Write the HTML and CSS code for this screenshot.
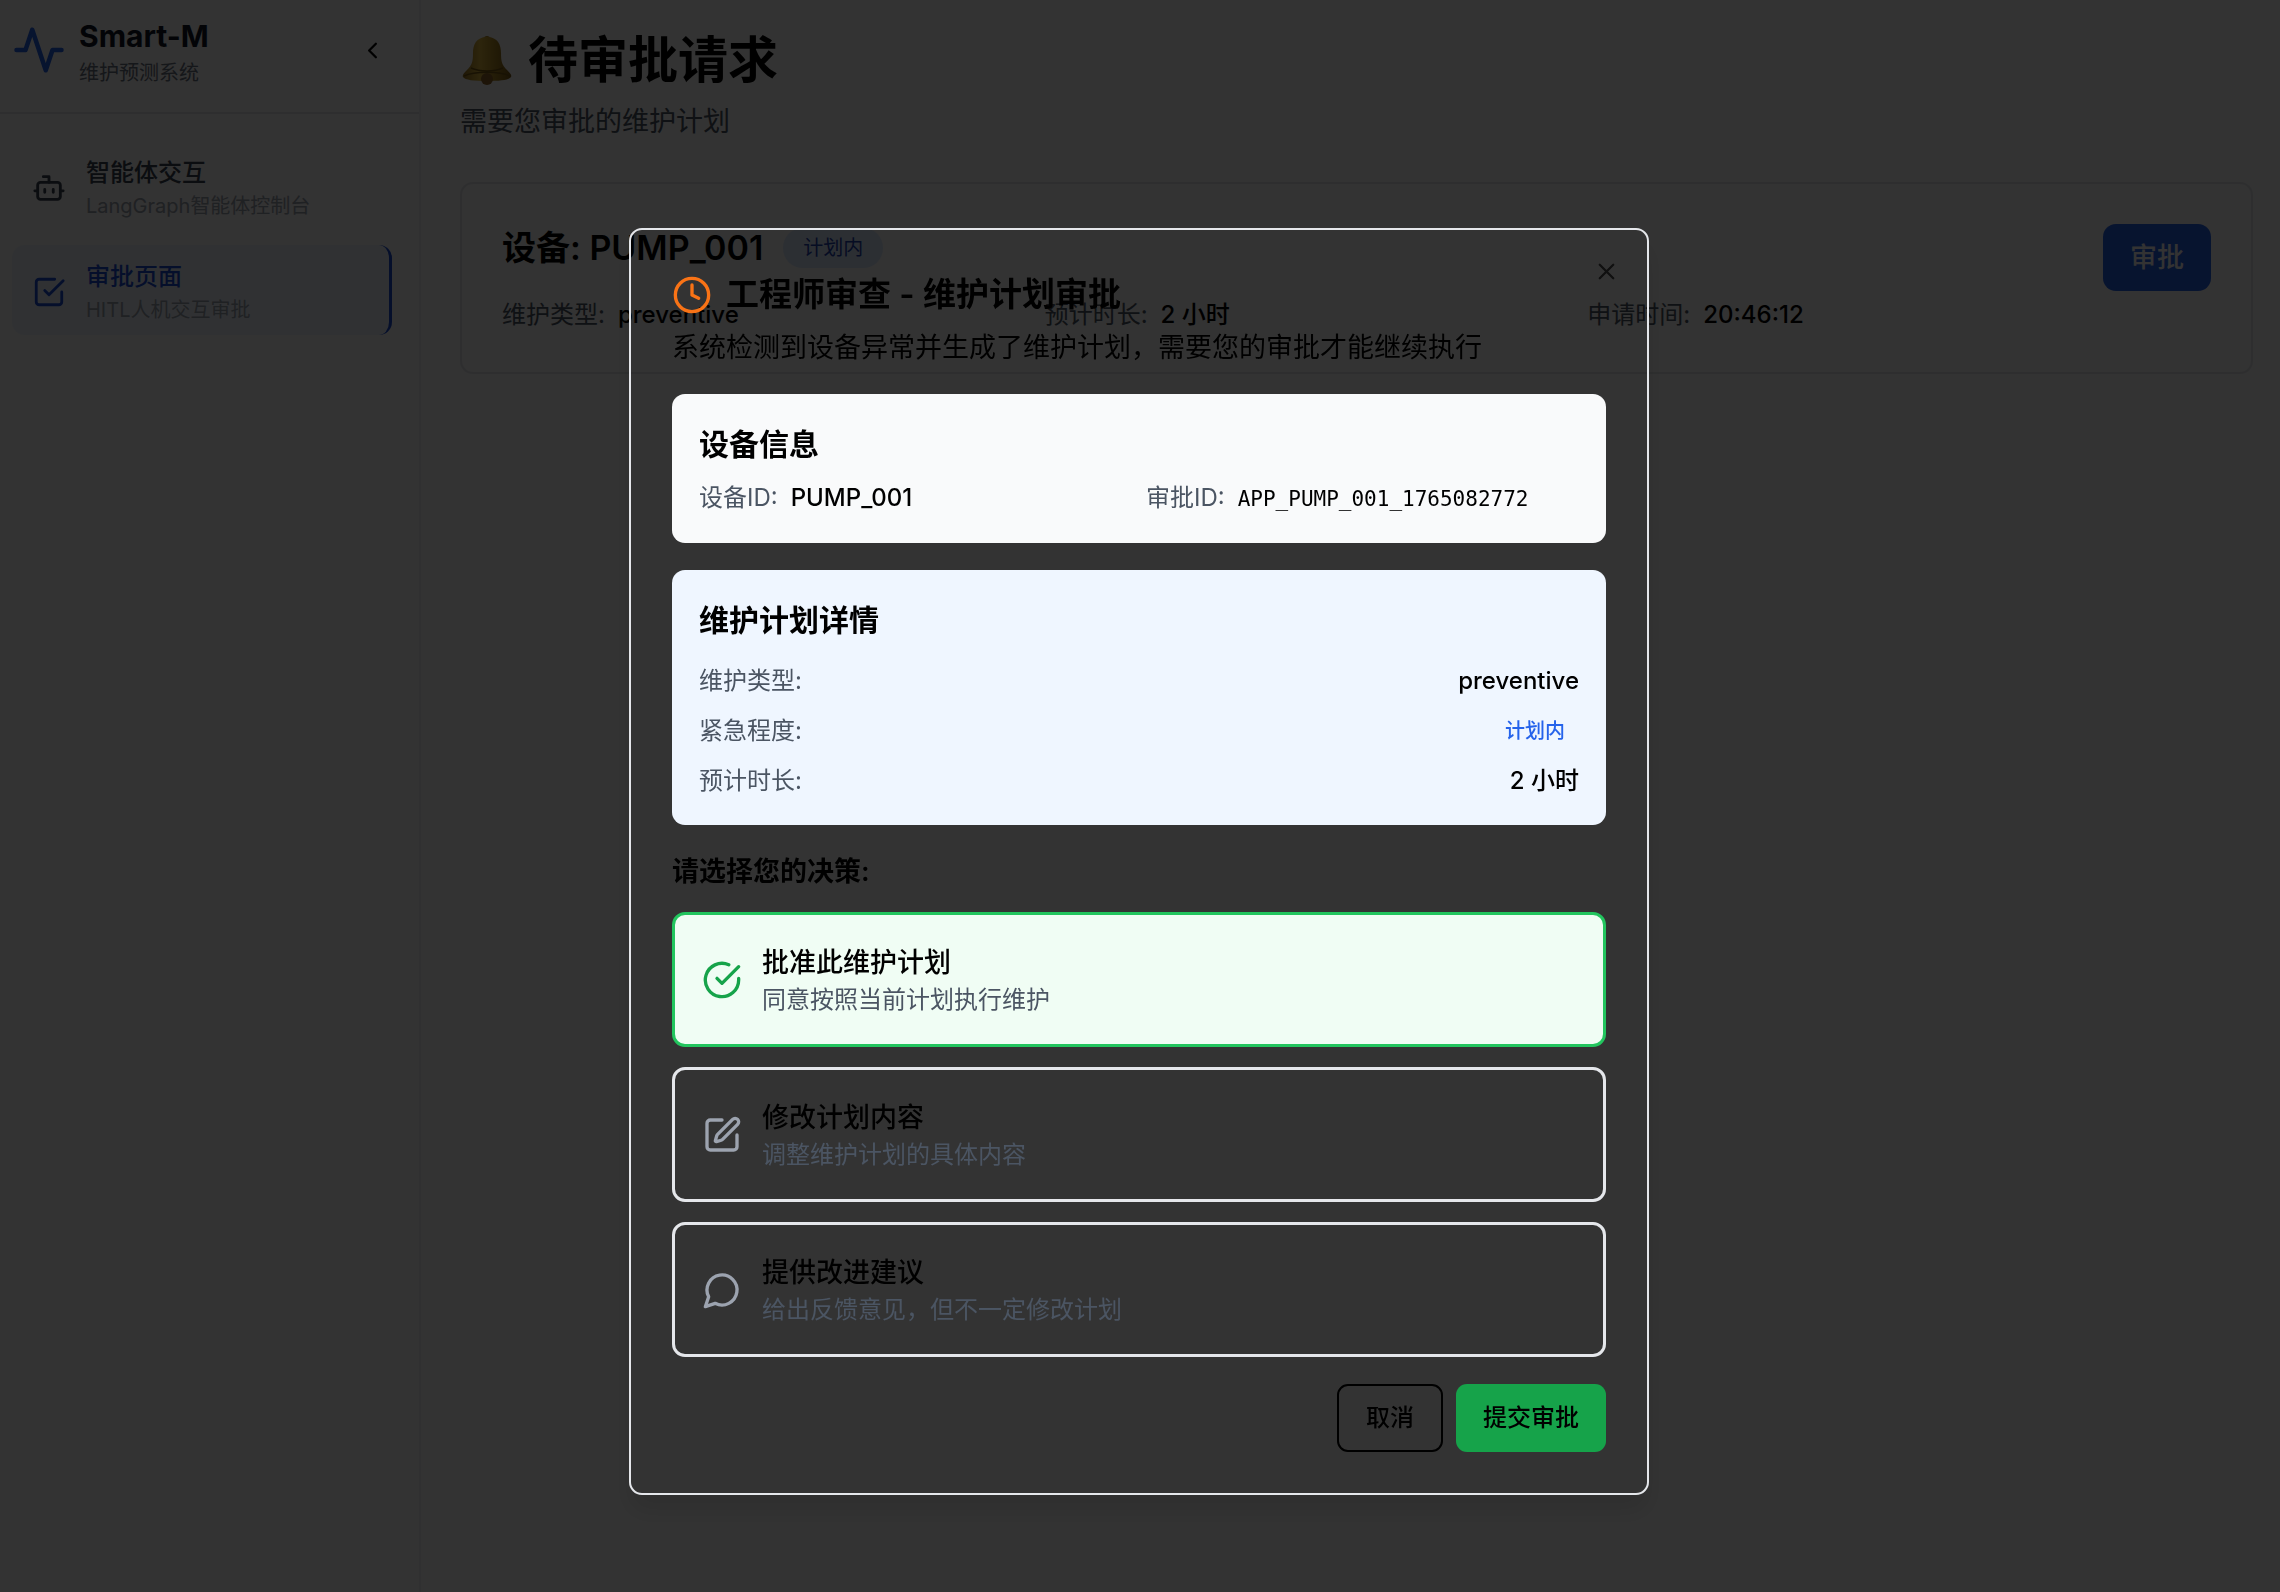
FILE: index.html
```html
<!DOCTYPE html>
<html lang="zh-CN">
<head>
    <meta charset="UTF-8">
    <meta name="viewport" content="width=device-width, initial-scale=1.0">
    <title>Smart-M 维护预测系统</title>
    <link rel="stylesheet" href="styles.css">
</head>
<body>
    <div class="layout">
        <aside class="sidebar">
            <div class="sidebar-header">
                <svg class="icon logo" viewBox="0 0 24 24"><path d="M22 12h-4l-3 9L9 3l-3 9H2"/></svg>
                <div class="brand">
                    <div class="brand-name">Smart-M</div>
                    <div class="brand-sub">维护预测系统</div>
                </div>
                <button type="button" class="collapse" aria-label="收起侧边栏">
                    <svg class="icon icon-sm" viewBox="0 0 24 24"><path d="m15 18-6-6 6-6"/></svg>
                </button>
            </div>
            <nav class="nav">
                <a href="#agent" class="nav-item">
                    <svg class="icon icon-md" viewBox="0 0 24 24"><path d="M12 8V4H8"/><rect width="16" height="12" x="4" y="8" rx="2"/><path d="M2 14h2M20 14h2M15 13v2M9 13v2"/></svg>
                    <span class="nav-text">
                        <span class="nav-title">智能体交互</span>
                        <span class="nav-desc">LangGraph智能体控制台</span>
                    </span>
                </a>
                <a href="#approval" class="nav-item active">
                    <svg class="icon icon-md" viewBox="0 0 24 24"><path d="m9 11 3 3L22 4"/><path d="M21 12v7a2 2 0 0 1-2 2H5a2 2 0 0 1-2-2V5a2 2 0 0 1 2-2h11"/></svg>
                    <span class="nav-text">
                        <span class="nav-title">审批页面</span>
                        <span class="nav-desc">HITL人机交互审批</span>
                    </span>
                </a>
            </nav>
        </aside>

        <main class="main">
            <h1 class="page-title">
                <svg class="bell" viewBox="0 0 50 50">
                    <defs>
                        <linearGradient id="bellBody" x1="0" y1="0" x2="1" y2="0">
                            <stop offset="0" stop-color="#9a7420"/>
                            <stop offset="0.35" stop-color="#e0b840"/>
                            <stop offset="0.65" stop-color="#b08a24"/>
                            <stop offset="1" stop-color="#7a5a14"/>
                        </linearGradient>
                    </defs>
                    <circle cx="25" cy="4" r="3" fill="#a8801c"/>
                    <path d="M25 2C14 2 11 10 11 18c0 9-1 12-6 17-3 3-5 5-4 7 2 3 11 4 24 4s22-1 24-4c1-2-1-4-4-7-5-5-6-8-6-17C39 10 36 2 25 2z" fill="url(#bellBody)"/>
                    <path d="M9 33c9 4 23 4 32 0M2 41c10-5 36-5 46 0" fill="none" stroke="#7a5a14" stroke-width="1.5"/>
                    <circle cx="25" cy="44" r="6" fill="#8f6428"/>
                </svg>
                待审批请求
            </h1>
            <p class="page-sub">需要您审批的维护计划</p>

            <section class="card">
                <div class="card-body">
                    <div class="card-head">
                        <h2 class="card-title">设备: PUMP_001</h2>
                        <span class="tag">计划内</span>
                    </div>
                    <div class="meta">
                        <div><span class="label">维护类型:</span><span class="value">preventive</span></div>
                        <div><span class="label">预计时长:</span><span class="value">2 小时</span></div>
                        <div><span class="label">申请时间:</span><span class="value">20:46:12</span></div>
                    </div>
                </div>
                <button type="button" class="approve">审批</button>
            </section>
        </main>
    </div>

    <div class="overlay">
        <div class="modal" role="dialog" aria-modal="true" aria-labelledby="modalTitle">
            <button type="button" class="close" aria-label="关闭">
                <svg class="icon icon-sm" viewBox="0 0 24 24"><path d="M18 6 6 18M6 6l12 12"/></svg>
            </button>
            <h2 class="modal-title" id="modalTitle">
                <svg class="icon icon-lg clock" viewBox="0 0 24 24"><circle cx="12" cy="12" r="10"/><path d="M12 6v6l4 2"/></svg>
                工程师审查 - 维护计划审批
            </h2>
            <p class="modal-desc">系统检测到设备异常并生成了维护计划，需要您的审批才能继续执行</p>

            <div class="panels">
                <section class="panel">
                    <h3 class="panel-title">设备信息</h3>
                    <div class="panel-grid">
                        <div><span class="label">设备ID:</span><span class="value">PUMP_001</span></div>
                        <div><span class="label">审批ID:</span><span class="value mono">APP_PUMP_001_1765082772</span></div>
                    </div>
                </section>

                <section class="panel panel-blue">
                    <h3 class="panel-title">维护计划详情</h3>
                    <div class="panel-rows">
                        <div class="row"><span class="label">维护类型:</span><span class="value">preventive</span></div>
                        <div class="row"><span class="label">紧急程度:</span><span class="level">计划内</span></div>
                        <div class="row"><span class="label">预计时长:</span><span class="value">2 小时</span></div>
                    </div>
                </section>

                <div class="decision">
                    <h3 class="decision-title">请选择您的决策:</h3>
                    <div class="options">
                        <button type="button" class="option selected" aria-pressed="true">
                            <svg class="icon icon-lg" viewBox="0 0 24 24"><path d="M22 11.08V12a10 10 0 1 1-5.93-9.14"/><path d="m9 11 3 3L22 4"/></svg>
                            <span class="option-text">
                                <span class="option-title">批准此维护计划</span>
                                <span class="option-desc">同意按照当前计划执行维护</span>
                            </span>
                        </button>
                        <button type="button" class="option" aria-pressed="false">
                            <svg class="icon icon-lg" viewBox="0 0 24 24"><path d="M12 3H5a2 2 0 0 0-2 2v14a2 2 0 0 0 2 2h14a2 2 0 0 0 2-2v-7"/><path d="M18.375 2.625a1 1 0 0 1 3 3l-9.013 9.014a2 2 0 0 1-.853.505l-2.873.84a.5.5 0 0 1-.62-.62l.84-2.873a2 2 0 0 1 .506-.852z"/></svg>
                            <span class="option-text">
                                <span class="option-title">修改计划内容</span>
                                <span class="option-desc">调整维护计划的具体内容</span>
                            </span>
                        </button>
                        <button type="button" class="option" aria-pressed="false">
                            <svg class="icon icon-lg" viewBox="0 0 24 24"><path d="M7.9 20A9 9 0 1 0 4 16.1L2 22Z"/></svg>
                            <span class="option-text">
                                <span class="option-title">提供改进建议</span>
                                <span class="option-desc">给出反馈意见，但不一定修改计划</span>
                            </span>
                        </button>
                    </div>
                </div>

                <div class="actions">
                    <button type="button" class="btn btn-cancel">取消</button>
                    <button type="button" class="btn btn-submit">提交审批</button>
                </div>
            </div>
        </div>
    </div>
</body>
</html>
```

FILE: styles.css
```css
* {
    box-sizing: border-box;
    margin: 0;
    padding: 0;
}

body {
    font-family: Inter, "Noto Sans CJK SC", sans-serif;
    font-size: 24px;
    line-height: 34px;
    color: #000;
    background: #fcfcfc;
}

button {
    font: inherit;
    color: inherit;
    background: none;
    border: none;
    cursor: pointer;
}

a {
    color: inherit;
    text-decoration: none;
}

.icon {
    flex: none;
    fill: none;
    stroke: currentColor;
    stroke-width: 2;
    stroke-linecap: round;
    stroke-linejoin: round;
}

.icon-sm {
    width: 27px;
    height: 27px;
}

.icon-md {
    width: 34px;
    height: 34px;
}

.icon-lg {
    width: 40px;
    height: 40px;
}

.layout {
    display: flex;
    min-height: 100vh;
}

/* sidebar */
.sidebar {
    flex: none;
    width: 421px;
    background: #fcfcfc;
    border-right: 2px solid #eff0f2;
}

.sidebar-header {
    display: flex;
    align-items: center;
    gap: 13px;
    padding: 13px 27px 25px 12px;
    border-bottom: 2px solid #e5e7eb;
}

.logo {
    width: 54px;
    height: 54px;
    color: #2563eb;
}

.brand {
    flex: 1;
}

.brand-name {
    font-size: 30px;
    font-weight: 700;
    line-height: 47px;
    color: #111827;
}

.brand-sub {
    font-size: 20px;
    line-height: 27px;
    color: #6b7280;
}

.collapse {
    display: flex;
    align-items: center;
    justify-content: center;
    width: 40px;
    height: 40px;
}

.nav {
    display: flex;
    flex-direction: column;
    gap: 14px;
    padding: 27px 27px 27px 12px;
}

.nav-item {
    display: flex;
    align-items: center;
    gap: 20px;
    padding: 15px 20px 11px;
    border-radius: 13px;
    color: #374151;
}

.nav-text {
    display: flex;
    flex-direction: column;
    gap: 2px;
}

.nav-title {
    font-weight: 500;
}

.nav-desc {
    font-size: 20px;
    line-height: 28px;
    color: #9ca3af;
}

.nav-item.active {
    background: #eff6ff;
    border-right: 3px solid #1d4ed8;
    color: #1d4ed8;
}

/* page */
.main {
    flex: 1;
    padding: 28px 27px 27px 39px;
}

.page-title {
    display: flex;
    align-items: center;
    gap: 14px;
    font-size: 50px;
    font-weight: 700;
    line-height: 64px;
}

.bell {
    width: 54px;
    height: 50px;
}

.page-sub {
    margin-top: 9px;
    font-size: 27px;
    line-height: 41px;
    color: #4b5563;
}

.card {
    display: flex;
    align-items: flex-start;
    margin-top: 40px;
    padding: 40px;
    border: 2px solid #e5e7eb;
    border-radius: 13px;
}

.card-body {
    flex: 1;
}

.card-head {
    display: flex;
    align-items: center;
    gap: 20px;
    margin-bottom: 27px;
}

.card-title {
    font-size: 34px;
    font-weight: 600;
    line-height: 47px;
}

.tag {
    padding: 6px 20px;
    border-radius: 20px;
    background: #dbeafe;
    color: #1e40af;
    font-size: 20px;
    line-height: 28px;
}

.meta {
    display: grid;
    grid-template-columns: repeat(3, 1fr);
    gap: 27px;
}

.label {
    color: #4b5563;
}

.value {
    margin-left: 13px;
    font-weight: 500;
}

.approve {
    padding: 13px 27px;
    border-radius: 13px;
    background: #2563eb;
    color: #fff;
    font-size: 27px;
    font-weight: 500;
    line-height: 41px;
}

/* dialog */
.overlay {
    position: fixed;
    inset: 0;
    display: flex;
    justify-content: center;
    align-items: flex-start;
    padding: 228px 2px 0 0;
    background: rgba(0, 0, 0, 0.8);
}

.modal {
    position: relative;
    width: 100%;
    max-width: 1020px;
    padding: 41px;
    border: 2px solid #e5e7eb;
    border-radius: 13px;
    box-shadow: 0 17px 25px rgba(0, 0, 0, 0.1);
}

.close {
    position: absolute;
    top: 28px;
    right: 27px;
    display: flex;
    opacity: 0.7;
}

.modal-title {
    display: flex;
    align-items: center;
    gap: 14px;
    font-size: 33px;
    font-weight: 600;
    line-height: 47px;
}

.clock {
    color: #f97316;
}

.modal-desc {
    margin-top: 9px;
    font-size: 27px;
    line-height: 41px;
}

.panels {
    display: flex;
    flex-direction: column;
    gap: 27px;
    margin-top: 26px;
}

.panel {
    padding: 27px;
    border-radius: 13px;
    background: #f9fafb;
}

.panel-blue {
    background: #eff6ff;
}

.panel-title {
    font-size: 30px;
    font-weight: 600;
    line-height: 47px;
}

.panel-grid {
    display: grid;
    grid-template-columns: 1fr 1fr;
    gap: 14px;
    margin-top: 13px;
}

.mono {
    font-family: "DejaVu Sans Mono", monospace;
    font-size: 21px;
    font-weight: 400;
}

.panel-rows {
    display: flex;
    flex-direction: column;
    gap: 13px;
    margin-top: 20px;
}

.row {
    display: flex;
    align-items: center;
    justify-content: space-between;
}

.level {
    padding: 6px 14px;
    color: #2563eb;
    font-size: 20px;
    font-weight: 500;
    line-height: 28px;
}

.decision-title {
    font-size: 27px;
    font-weight: 600;
    line-height: 40px;
}

.options {
    display: flex;
    flex-direction: column;
    gap: 20px;
    margin-top: 20px;
}

.option {
    display: flex;
    align-items: center;
    gap: 20px;
    padding: 27px;
    border: 3px solid #e5e7eb;
    border-radius: 13px;
    text-align: left;
}

.option .icon {
    color: #9ca3af;
}

.option.selected {
    border-color: #22c55e;
    background: #f0fdf4;
}

.option.selected .icon {
    color: #16a34a;
}

.option-text {
    display: flex;
    flex-direction: column;
}

.option-title {
    font-size: 27px;
    font-weight: 500;
    line-height: 41px;
}

.option-desc {
    color: #4b5563;
}

.actions {
    display: flex;
    justify-content: flex-end;
    gap: 13px;
}

.btn {
    padding: 15px 27px;
    border: 2px solid #000;
    border-radius: 11px;
    font-weight: 500;
}

.btn-submit {
    padding: 17px 27px;
    border: none;
    background: #16a34a;
}
```
